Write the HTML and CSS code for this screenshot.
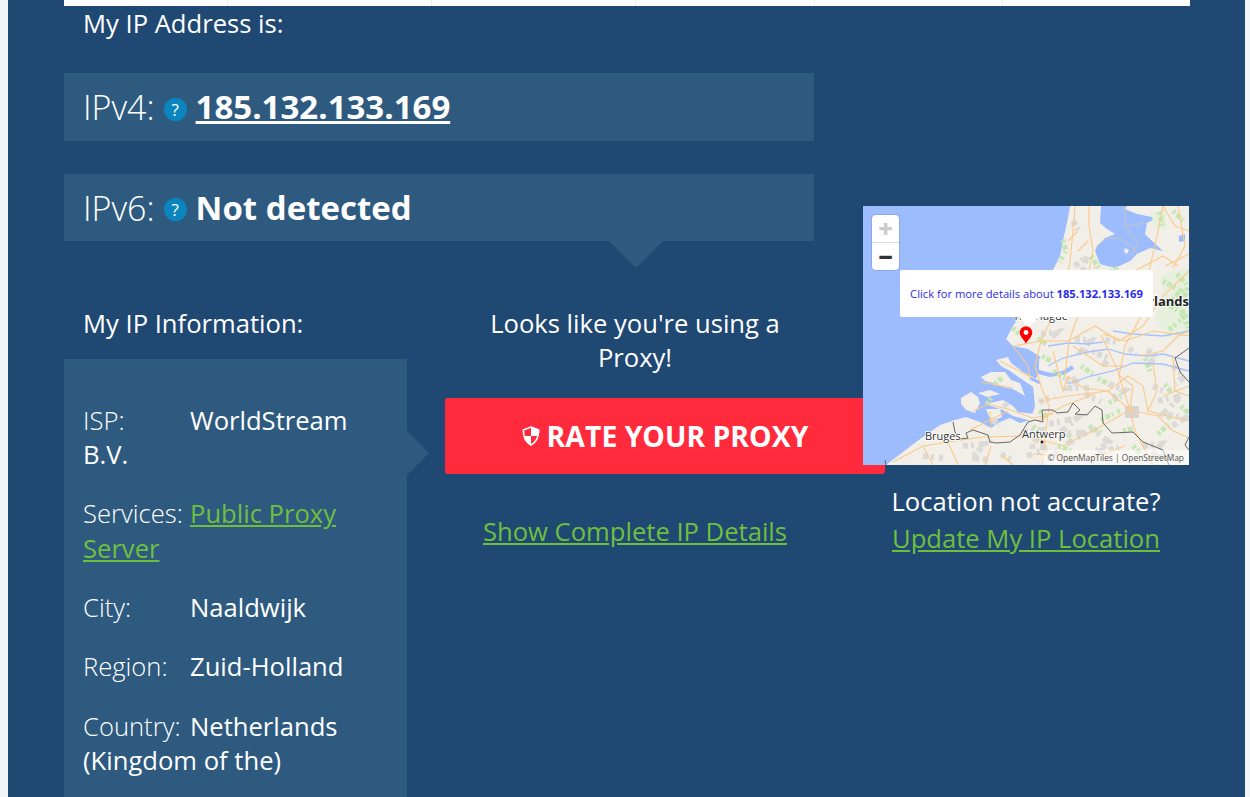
FILE: index.html
```html
<!DOCTYPE html>
<html lang="en">
<head>
<meta charset="utf-8">
<title>My IP Address</title>
<link rel="stylesheet" href="styles.css">
</head>
<body>
<main class="main">
  <div class="strip"><span class="c1"></span><span class="c2"></span><span class="c3"></span><span class="c4"></span><span class="c5"></span><span class="c6"></span></div>
  <div class="content">
    <section class="left">
      <h2 class="heading">My IP Address is:</h2>
      <div class="ipbox ipbox-v4"><span class="ip-label">IPv4:</span><span class="help">?</span><a class="ip-value" href="#">185.132.133.169</a></div>
      <div class="ipbox ipbox-v6"><span class="ip-label">IPv6:</span><span class="help">?</span><strong class="ip-value-plain">Not detected</strong></div>
      <div class="lower">
        <div class="info">
          <h3 class="info-title">My IP Information:</h3>
          <div class="info-box">
            <p class="row"><span class="lbl">ISP:</span>WorldStream B.V.</p>
            <p class="row"><span class="lbl">Services:</span><a href="#" class="link">Public Proxy Server</a></p>
            <p class="row"><span class="lbl">City:</span>Naaldwijk</p>
            <p class="row"><span class="lbl">Region:</span>Zuid-Holland</p>
            <p class="row"><span class="lbl">Country:</span>Netherlands (Kingdom of the)</p>
          </div>
        </div>
        <div class="center">
          <p class="proxy-text">Looks like you're using a Proxy!</p>
          <a href="#" class="rate">
            <svg class="shield" viewBox="0 0 18 20"><path class="shield-o" d="M9 1 L16.7 4 C16.7 10 15.5 15.5 9 19 C2.5 15.5 1.3 10 1.3 4 Z"/><path class="shield-f" d="M9 1 L16.7 4 C16.7 6.5 16.5 8.3 16 10 L9 10 Z M9 10 L9 19 C4.8 16.8 3 13.5 2.1 10 Z"/></svg>
            RATE YOUR PROXY
          </a>
          <a href="#" class="link details">Show Complete IP Details</a>
        </div>
      </div>
    </section>
    <aside class="right">
      <div class="map">
        <svg class="map-svg" viewBox="0 0 326 259">
          <rect class="sea" width="326" height="259"/>
          <g class="base">
            <path class="land" d="M207,0 L205,12 L201,30 L197,50 L189,66 L175,85 L160,105 L150,120 L143,133 L150,140 L165,143 L176,150 L176,165 L170,180 L172,200 L170,206 L167,214 L157,217 L147,212 L137,216 L128,222 L117,216 L103,211 L92,214 L77,219 L53,236 L23,259 L326,259 L326,0 Z"/>
            <path class="land" d="M133,154 L145,151 L148,157 L160,166 L172,172 L172,182 L157,172 L147,165 L138,160 Z"/>
            <path class="land" d="M118,171 L128,166 L142,166 L148,174 L157,177 L162,190 L150,183 L140,181 L130,177 L122,175 Z"/>
            <path class="land" d="M98,192 L108,186 L115,191 L117,197 L112,207 L103,204 L98,198 Z"/>
            <path class="land" d="M115,187 L127,184 L137,188 L124,191 Z"/>
            <path class="land" d="M122,198 L140,194 L150,200 L155,206 L172,208 L172,216 L150,210 L140,204 Z"/>
            <path class="land" d="M123,203 L137,203 L139,211 L128,215 Z"/>
            <path class="inland" d="M238,0 L237,17 L244,23 L252,28 L242,32 L234,40 L232,45 L237,58 L252,62 L267,55 L274,48 L287,42 L300,45 L287,33 L282,28 L284,17 L294,12 L274,8 L262,3 L264,0 Z"/>
            <path class="inland" d="M316,30 L322,28 L322,35 L316,36 Z"/>
            <path class="land" d="M262,42 L266,44 L264,48 L261,46 Z"/>
            <path class="thin-road" d="M262,0 L262,12 L262,20 L275,37 L268,50 M234,40 L244,32 L258,33 L269,40 L274,48 M284,17 L262,20"/>
            <path class="channel" d="M176,150 L170,158 L168,164 L187,169 L200,167 L210,161"/>
            <path class="channel-t" d="M167,172 L177,177 M165,200 L171,201"/>
            <path class="forest" d="M298,70 L326,62 L326,130 L304,132 L292,112 L300,92 Z M288,8 L302,2 L303,24 L292,22 Z"/>
            <g class="greens">
              <path d="M300,75 L318,85 L305,98 L322,110 L306,124"/>
              <path d="M314,68 L325,80 L318,100 L325,122"/>
              <path d="M296,6 L300,20 M310,5 L322,16"/>
              <path d="M200,34 L203,45 L197,56"/>
              <path d="M228,50 L236,62 M246,66 L256,62"/>
              <path d="M179,150 L188,155 M175,132 L183,138 M150,122 L156,128"/>
              <path d="M190,165 L202,172 M218,160 L230,168 M235,172 L248,180"/>
              <path d="M246,197 L258,190 M238,214 L258,204 M226,220 L240,228"/>
              <path d="M282,152 L288,168 M300,207 L310,214 M302,178 L308,186"/>
              <path d="M132,178 L139,172 M124,198 L128,192 M200,225 L210,232 M195,240 L208,245"/>
              <path d="M176,205 L186,212 M170,220 L178,226 M295,228 L306,218"/>
              <path d="M260,225 L272,222 M318,200 L326,208 M270,240 L278,248"/>
            </g>
            <g class="urbans">
              <path d="M172,92 L184,88 L190,100 L180,106"/>
              <path d="M210,15 L215,24 M212,60 L224,50 L218,72"/>
              <path d="M212,133 L228,134 L218,146 L232,146"/>
              <path d="M178,128 L194,126 L186,134"/>
              <path d="M234,148 L246,152 L240,160 M242,134 L254,136"/>
              <path d="M202,175 L216,172 L206,182 L226,182"/>
              <path d="M284,144 L294,150 L286,158 M266,142 L272,148"/>
              <path d="M295,195 L318,190 L300,208 L322,212 L306,222"/>
              <path d="M160,226 L178,224 L170,240 L186,242 L164,250"/>
              <path d="M100,240 L122,238 L108,252 L128,254"/>
              <path d="M186,218 L214,212 L196,228 L224,226 L204,238"/>
              <path d="M228,222 L246,236 L232,246 L256,242"/>
              <path d="M280,240 L298,238 L288,252 L310,250"/>
              <path d="M190,246 L210,254 M138,248 L152,256 M60,250 L80,252"/>
              <path d="M246,178 L262,184 L250,192 M290,180 L302,186"/>
              <path d="M141,197 L146,203 M130,214 L136,220"/>
              <path d="M176,196 L192,190 M222,188 L238,196"/>
              <path d="M310,160 L322,170 L312,178 M226,100 L232,108 M258,84 L268,92"/>
            </g>
            <rect class="city" x="262" y="200" width="14" height="12"/>
            <g class="river">
              <path d="M185,160 L200,152 L225,146 L245,143 L262,148 L285,150 L300,148 L326,155"/>
              <path d="M205,178 L228,170 L250,165 L270,157 L300,158 L326,165"/>
              <path d="M250,125 L270,128 L300,130 L326,125"/>
              <path d="M185,140 L205,137 L225,138 L240,136"/>
            </g>
            <g class="road">
              <path d="M212,0 L210,25 L207,55 L205,70 L190,110 L178,135 L172,160 L178,180 L186,200 L182,232 L180,259"/>
              <path d="M226,0 L226,20 L230,45 L225,70 L215,110 L206,135 L202,170"/>
              <path d="M300,0 L294,30 L285,70 L278,110 L262,140 L256,170 L267,204 L272,225 L290,259"/>
              <path d="M326,65 L300,90 L280,120 L256,135 L232,120 L206,135 L178,135 L150,140"/>
              <path d="M326,130 L290,125 L262,135 L240,128"/>
              <path d="M238,129 L247,148 L257,170 L270,180 L267,204 L245,185 L220,182 L205,170"/>
              <path d="M176,195 L205,190 L245,185 L265,170 L280,180 L285,205 L326,215"/>
              <path d="M267,204 L235,222 L200,240 L182,235 L160,230 L120,231 L85,236 L60,240 L30,256"/>
              <path d="M276,150 L300,145 L315,130 L326,125"/>
              <path d="M267,204 L295,210 L310,225 L326,232"/>
              <path d="M127,205 L128,222 M110,205 L125,198 L148,204 L170,212 L190,208"/>
              <path d="M85,236 L95,259 M128,240 L122,259 M140,250 L150,259 M60,240 L70,259"/>
              <path d="M310,150 L312,185 L326,190 M290,158 L294,185 L285,205"/>
              <path d="M190,145 L200,185 L205,170 M150,140 L165,160 L167,172"/>
              <path d="M223,100 L232,60 M315,0 L322,40 L310,62 M270,66 L300,50 L315,60"/>
              <path d="M145,205 L107,224 M118,176 L150,182 M137,155 L170,172"/>
              <path d="M215,25 L205,35 M225,35 L215,45 M210,140 L240,160 L262,160 M175,215 L200,200 L232,188"/>
              <path d="M300,0 L312,20 L326,25 M302,60 L326,48 M170,248 L230,252 L262,240 M300,190 L326,180"/>
            </g>
            <path class="border" d="M90,216 L92,226 L97,233 L105,232 L103,227 L110,224 L125,229 L127,236 L133,237 L147,236 L157,229 L165,216 L172,214 L180,216 L179,204 L190,204 L194,207 L205,206 L210,197 L217,204 L212,208 L224,209 L232,200 L239,204 L240,217 L249,227 L270,226 L280,236 L300,244 L304,254 L306,259"/>
            <path class="border" d="M326,142 L312,152 L317,166 L326,176 M326,231 L322,239 L326,244 M22,254 L23,259"/>
          </g>
          <text class="place" x="62" y="234">Bruges</text>
          <text class="place" x="159" y="232">Antwerp</text>
          <circle class="dot" cx="179" cy="236" r="1.5"/>
          <text class="place" x="150" y="114">The Hague</text>
          <text class="place" x="189" y="72">Amsterdam</text>
          <text class="place place-b" x="326" y="100">Netherlands</text>
        </svg>
        <div class="zoom-ctl"><span class="zoom-btn zoom-in">+</span><span class="zoom-btn zoom-out">−</span></div>
        <div class="popup">Click for more details about <b>185.132.133.169</b></div>
        <svg class="pin" viewBox="0 0 14 18"><path class="pin-r" d="M7 0.5 C10.6 0.5 13.3 3.2 13.3 6.6 C13.3 10.4 9.4 13.6 7 17.5 C4.6 13.6 0.7 10.4 0.7 6.6 C0.7 3.2 3.4 0.5 7 0.5 Z"/><circle class="pin-w" cx="7" cy="6.5" r="2.4"/></svg>
        <div class="attrib">© OpenMapTiles | OpenStreetMap</div>
      </div>
      <p class="accuracy">Location not accurate?<br><a href="#" class="link">Update My IP Location</a></p>
    </aside>
  </div>
</main>
</body>
</html>
```
FILE: styles.css
```css
* { box-sizing: border-box; }
html, body { margin: 0; height: 100%; overflow: hidden; }
body { background: #f3f4f6; font-family: "Open Sans", "Noto Sans", sans-serif; color: #fff; font-size: 25.6px; }
a { color: inherit; }
.main { margin: 0 5px 0 8px; height: 797px; background: #1f4873; padding: 0 55px 0 56px; overflow: hidden; }
.strip { height: 6px; background: #fff; display: flex; width: 1126px; }
.strip span { border-right: 1px solid #eee; display: block; }
.c1 { width: 164px; } .c2 { width: 204px; } .c3 { width: 204px; } .c4 { width: 179px; } .c5 { width: 188px; } .c6 { flex: 1; border-right: 0 !important; }
.content { display: flex; gap: 49px; align-items: flex-start; }
.left { width: 750px; flex: none; }
.right { width: 326px; flex: none; position: relative; z-index: 2; padding-top: 200px; }
.heading { margin: 0; padding: 1px 0 0 19px; font-weight: 400; font-size: 25.6px; line-height: 34px; height: 67px; }
.ipbox { background: #2e5a80; height: 68px; padding-left: 19px; display: flex; align-items: center; font-size: 33px; }
.ipbox-v4 .ip-value { margin-top: -2px; }
.ipbox-v6 { margin-top: 33px; height: 67px; position: relative; }
.ipbox-v6::after { content: ""; position: absolute; left: 545px; top: 100%; border-style: solid; border-width: 27px 27px 0; border-color: #2e5a80 transparent transparent; }
.ip-label { font-weight: 300; font-size: 34px; }
.help { width: 23px; height: 23px; border-radius: 50%; background: #0a85bd; font-size: 17px; font-weight: 400; display: flex; align-items: center; justify-content: center; margin: 4px 9px 0 9px; }
.ip-value { font-weight: 700; }
.ip-value-plain { font-weight: 700; }
.lower { display: flex; margin-top: 66px; }
.info { width: 343px; flex: none; }
.info-title { margin: 0; font-weight: 400; font-size: 25.6px; line-height: 34px; padding-left: 19px; height: 52px; }
.info-box { background: #2e5a80; padding: 45px 19px 0; position: relative; height: 600px; }
.info-box::after { content: ""; position: absolute; left: 100%; top: 72px; border-style: solid; border-width: 22px 0 22px 22px; border-color: transparent transparent transparent #2e5a80; }
.row { margin: 0 0 25.2px; line-height: 34.13px; }
.lbl { display: inline-block; width: 107px; font-weight: 300; }
.link { color: #6fbf3f; }
.center { width: 380px; margin-left: 38px; flex: none; }
.proxy-text { margin: 0 0 23px; padding: 0 30px; text-align: center; line-height: 34px; }
.rate { display: flex; align-items: center; justify-content: center; gap: 7px; width: 440px; height: 76px; background: #ff2a3c; border-radius: 3px; color: #fff; text-decoration: none; font-weight: 700; font-size: 28.4px; }
.shield { width: 18px; height: 20px; }
.shield-o { fill: none; stroke: #fff; stroke-width: 1.6; }
.shield-f { fill: #fff; }
.details { display: block; text-align: center; margin-top: 41px; line-height: 34px; }
.map { width: 326px; height: 259px; position: relative; overflow: hidden; }
.map-svg { display: block; width: 326px; height: 259px; }
.base { filter: blur(0.35px); }
.sea { fill: #9dbcfd; }
.land { fill: #f2efe9; }
.inland { fill: #9dbcfd; }
.channel { fill: none; stroke: #9dbcfd; stroke-width: 4; }
.channel-t { fill: none; stroke: #9dbcfd; stroke-width: 3; }
.thin-road { fill: none; stroke: #d9c9a8; stroke-width: .7; }
.forest { fill: #e6f0dc; }
.greens { fill: none; stroke: #c6e6b4; stroke-width: 5; stroke-dasharray: 3 2 5 2 2 4; }
.urbans { fill: none; stroke: #dbdad7; stroke-width: 6; stroke-dasharray: 5 3 3 5 7 4; }
.city { fill: #d6d5d3; }
.river { fill: none; stroke: #a8c3fb; stroke-width: 1.3; }
.road { fill: none; stroke: #fbc98a; stroke-width: 1.1; }
.border { fill: none; stroke: #666; stroke-width: 1; }
.place { font-family: "Open Sans", sans-serif; font-size: 11px; fill: #333; stroke: #fff; stroke-width: 1.5px; paint-order: stroke; }
.place-b { font-weight: 700; font-size: 13px; fill: #222; text-anchor: end; }
.dot { fill: #222; }
.zoom-ctl { position: absolute; left: 9px; top: 9px; width: 27px; background: #fff; border-radius: 4px; box-shadow: 0 0 0 1px rgba(0,0,0,.1); display: flex; flex-direction: column; }
.zoom-btn { height: 27.5px; display: flex; align-items: center; justify-content: center; font-weight: 800; font-size: 25px; line-height: 1; color: #333; }
.zoom-in { color: #ccc; border-bottom: 1px solid #ddd; }
.popup { position: absolute; left: 37px; top: 64px; width: 253px; height: 47px; background: #fff; border-radius: 2px; color: #2a2aee; font-size: 11.2px; display: flex; align-items: center; justify-content: center; white-space: pre; }
.popup::after { content: ""; position: absolute; left: 119px; top: 100%; border-style: solid; border-width: 10px 10px 0; border-color: #fff transparent transparent; }
.popup b { font-weight: 700; }
.pin { position: absolute; left: 156px; top: 120px; width: 14px; height: 18px; }
.pin-r { fill: #f00; }
.pin-w { fill: #fff; }
.attrib { position: absolute; right: 0; bottom: 0; height: 15px; padding: 0 5px 0 4px; background: rgba(255,255,255,.5); font-size: 8.4px; line-height: 15px; color: #555; }
.accuracy { margin: 18px 0 0; text-align: center; line-height: 37px; }
```
